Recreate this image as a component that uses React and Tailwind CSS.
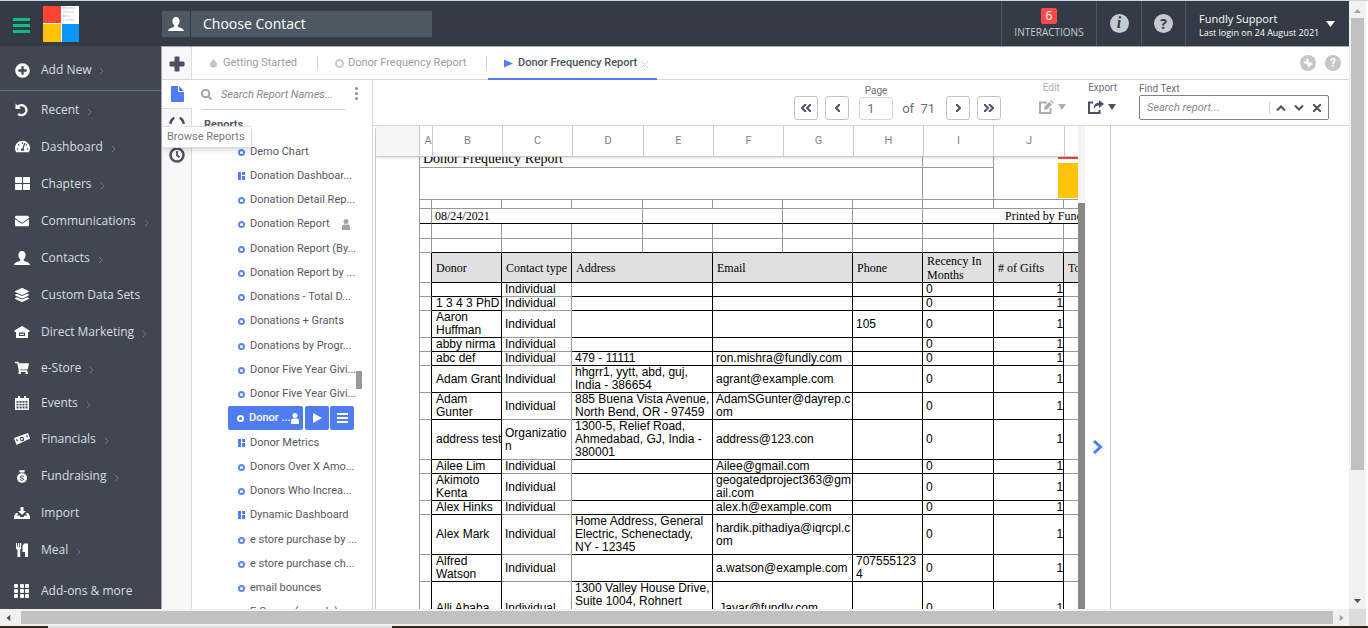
import React from "react"
import { FaPlusCircle, FaThLarge, FaEnvelope, FaShoppingCart, FaTachometerAlt, FaLayerGroup } from "react-icons/fa"

const menuItems = [
  { label: "Recent", icon: "recent", arrow: true },
  { label: "Dashboard", icon: "dashboard", arrow: true },
  { label: "Chapters", icon: "chapters", arrow: true },
  { label: "Communications", icon: "mail", arrow: true },
  { label: "Contacts", icon: "user", arrow: true },
  { label: "Custom Data Sets", icon: "layers", arrow: false },
  { label: "Direct Marketing", icon: "house", arrow: true },
  { label: "e-Store", icon: "cart", arrow: true, short: true },
  { label: "Events", icon: "calendar", arrow: true, short: true },
  { label: "Financials", icon: "cash", arrow: true },
  { label: "Fundraising", icon: "bag", arrow: true },
  { label: "Import", icon: "import", arrow: false },
  { label: "Meal", icon: "meal", arrow: true },
]

const reports = [
  { name: "Demo Chart" },
  { name: "Donation Dashboar...", dash: true },
  { name: "Donation Detail Rep..." },
  { name: "Donation Report", person: true },
  { name: "Donation Report (By..." },
  { name: "Donation Report by ..." },
  { name: "Donations - Total D..." },
  { name: "Donations + Grants" },
  { name: "Donations by Progr..." },
  { name: "Donor Five Year Givi..." },
  { name: "Donor Five Year Givi..." },
  { name: "Donor ...", active: true },
  { name: "Donor Metrics", dash: true },
  { name: "Donors Over X Amo..." },
  { name: "Donors Who Increa..." },
  { name: "Dynamic Dashboard", dash: true },
  { name: "e store purchase by ..." },
  { name: "e store purchase ch..." },
  { name: "email bounces" },
  { name: "E Comm (sample)" },
]

const rows = [
  { donor: "", type: "Individual", address: "", email: "", phone: "" },
  { donor: "1 3 4 3 PhD", type: "Individual", address: "", email: "", phone: "" },
  { donor: "Aaron\nHuffman", type: "Individual", address: "", email: "", phone: "105" },
  { donor: "abby nirma", type: "Individual", address: "", email: "", phone: "" },
  { donor: "abc def", type: "Individual", address: "479 - 11111", email: "ron.mishra@fundly.com", phone: "" },
  { donor: "Adam Grant", type: "Individual", address: "hhgrr1, yytt, abd, guj,\nIndia - 386654", email: "agrant@example.com", phone: "" },
  { donor: "Adam\nGunter", type: "Individual", address: "885 Buena Vista Avenue,\nNorth Bend, OR - 97459", email: "AdamSGunter@dayrep.c\nom", phone: "" },
  { donor: "address test", type: "Organizatio\nn", address: "1300-5, Relief Road,\nAhmedabad, GJ, India -\n380001", email: "address@123.con", phone: "" },
  { donor: "Ailee Lim", type: "Individual", address: "", email: "Ailee@gmail.com", phone: "" },
  { donor: "Akimoto\nKenta", type: "Individual", address: "", email: "geogatedproject363@gm\nail.com", phone: "" },
  { donor: "Alex Hinks", type: "Individual", address: "", email: "alex.h@example.com", phone: "" },
  { donor: "Alex Mark", type: "Individual", address: "Home Address, General\nElectric, Schenectady,\nNY - 12345", email: "hardik.pithadiya@iqrcpl.c\nom", phone: "" },
  { donor: "Alfred\nWatson", type: "Individual", address: "", email: "a.watson@example.com", phone: "707555123\n4" },
  { donor: "Alli Ababa", type: "Individual", address: "1300 Valley House Drive,\nSuite 1004, Rohnert\nPark, CA, United States -\n94928", email: " Jayar@fundly.com", phone: "" },
]

const columns = [
  { name: "A", width: "w-[13px] pl-1" },
  { name: "B", width: "w-[70px]" },
  { name: "C", width: "w-[70px]" },
  { name: "D", width: "w-[71px]" },
  { name: "E", width: "w-[70px]" },
  { name: "F", width: "w-[70px]" },
  { name: "G", width: "w-[70px]" },
  { name: "H", width: "w-[70px]" },
  { name: "I", width: "w-[70px]" },
  { name: "J", width: "w-[71px]" },
  { name: "", width: "w-[120px]" },
]

function PersonIcon({ className }) {
  return (
    <svg viewBox="0 0 16 14" className={className} fill="currentColor" aria-hidden="true">
      <path d="M8 0C5.6 0 4.4 1.7 4.4 4c0 1.8.8 3.4 1.8 4.3v1.5C4.8 10.8.5 11 0 14h16c-.5-3-4.8-3.2-6.2-4.2V8.3c1-.9 1.8-2.5 1.8-4.3C11.6 1.7 10.4 0 8 0z" />
    </svg>
  )
}

function SmallPerson({ className }) {
  return (
    <svg viewBox="0 0 8 11" className={className} fill="currentColor" aria-hidden="true">
      <circle cx="4" cy="2.5" r="2.5" />
      <path d="M0 11V8.2C0 6.5 1.2 5.6 2.4 5.6h3.200C6.8 5.6 8 6.5 8 8.2V11z" />
    </svg>
  )
}

function Caret({ className }) {
  return (
    <svg viewBox="0 0 8 6" preserveAspectRatio="none" className={`shrink-0 ${className}`} fill="currentColor" aria-hidden="true">
      <path d="M0 0h8L4 6z" />
    </svg>
  )
}

function Chevron({ className, d = "M1 1l4 4-4 4", box = "0 0 6 10", width = "2" }) {
  return (
    <svg viewBox={box} className={className} fill="none" stroke="currentColor" strokeWidth={width} aria-hidden="true">
      <path d={d} />
    </svg>
  )
}

function MenuIcon({ name }) {
  if (name === "recent")
    return (
      <svg viewBox="0 0 14 14" className="size-3.5" fill="none" stroke="currentColor" strokeWidth="2.400">
        <path d="M3 3.500A5 5 0 1 1 3.200 11" />
        <path d="M.5.5v5.500h5.500z" fill="currentColor" stroke="none" />
      </svg>
    )
  if (name === "dashboard") return <FaTachometerAlt className="size-[15px]" />
  if (name === "chapters")
    return (
      <FaThLarge className="size-[15px]" />
    )
  if (name === "mail") return <FaEnvelope className="size-3.5" />
  if (name === "user") return <PersonIcon className="h-3.5 w-4" />
  if (name === "layers") return <FaLayerGroup className="size-3.5" />
  if (name === "cart") return <FaShoppingCart className="size-3.5" />
  if (name === "house")
    return (
      <svg viewBox="0 0 16 14" className="h-3.5 w-4" fill="currentColor">
        <path fillRule="evenodd" d="M8 1l7.500 4.500V7H14v6H2V7H.5V5.500zM5 7.500V11h6V7.500z" />
        <path d="M6 8.800h4v1.200H6z" />
      </svg>
    )
  if (name === "calendar")
    return (
      <svg viewBox="0 0 14 14" className="size-3.5" fill="currentColor">
        <path
          fillRule="evenodd"
          d="M3 0h2v2h4V0h2v2h3v12H0V2h3zM1.500 5v1.800h2V5zm3 0v1.800h2V5zm3 0v1.800h2V5zm3 0v1.800h2V5zm-9 2.800v1.800h2V7.800zm3 0v1.800h2V7.800zm3 0v1.800h2V7.800zm3 0v1.800h2V7.800zm-9 2.800v1.800h2v-1.800zm3 0v1.800h2v-1.800zm3 0v1.800h2v-1.800zm3 0v1.800h2v-1.800z"
        />
      </svg>
    )
  if (name === "cash")
    return (
      <svg viewBox="0 0 16 14" className="h-3.5 w-4" fill="currentColor">
        <path
          fillRule="evenodd"
          d="M0 6L14 1l2 5.500L2.500 13zM8 4.800a2.200 2.200 0 1 0 .1 4.400A2.200 2.200 0 0 0 8 4.800zM2 7.500l.8 2 1.200-.5-.8-2zm10-4l.8 2 1.200-.5-.8-2z"
        />
        <circle cx="8" cy="7" r="1" />
      </svg>
    )
  if (name === "bag")
    return (
      <svg viewBox="0 0 14 14" className="size-3.5" fill="currentColor">
        <path d="M4 1l1.500.6L7 1l1.500.6L10 1 9.200 3.400H4.800z" />
        <ellipse cx="7" cy="9" rx="5" ry="4.800" />
        <path d="M8.800 7.600C8 6.600 5.300 6.700 5.300 8s3.400.9 3.400 2.200-2.700 1.400-3.500.4" fill="none" stroke="#414751" />
      </svg>
    )
  if (name === "import")
    return (
      <svg viewBox="0 0 16 14" className="h-3.5 w-4" fill="currentColor">
        <path d="M6.500 1h3v4H12L8 9 4 5h2.500z" />
        <path d="M2 7h2.200L3 9.500h2.500L6.500 11h3l1-1.500H13L11.800 7H14l2 3v3H0v-3z" />
      </svg>
    )
  return (
    <svg viewBox="0 0 14 14" className="size-3.5" fill="currentColor">
      <path d="M1 0h1.200v4h.8V0h1.200v4H5V0h1.200v5.500L5.200 7v7H2.500V7L1 5.500zM7.500 3L9 .5h4V14h-3V9H7.500z" />
    </svg>
  )
}

function Sidebar() {
  return (
    <nav className="w-[161px] shrink-0 overflow-hidden bg-[#414751] font-['Open_Sans',sans-serif] text-xs text-[#d9dde2]">
      <a href="#add" className="flex h-[45px] items-center border-b border-[#66748a] pt-1 pl-3.5">
        <span className="flex w-4 justify-center text-white">
          <FaPlusCircle className="size-[15px]" />
        </span>
        <span className="ml-[11px]">Add New</span>
        <Chevron className="mt-0.5 ml-2 h-2 w-[5px] text-[#808791]" width="1" />
      </a>
      <ul>
        {menuItems.map((item) => (
          <li key={item.label}>
            <a href="#menu" className={`flex items-center pl-3.5 ${item.short ? "h-[35px]" : "h-[37px]"}`}>
              <span className="flex w-4 justify-center text-white">
                <MenuIcon name={item.icon} />
              </span>
              <span className="ml-[11px] whitespace-nowrap">{item.label}</span>
              {item.arrow && <Chevron className="mt-1 ml-2 h-2 w-[5px] text-[#808791]" width="1" />}
            </a>
          </li>
        ))}
      </ul>
      <a href="#more" className="flex h-[45px] items-center pl-3.5">
        <span className="grid w-4 grid-cols-3 gap-px">
          {[...Array(9)].map((_, i) => (
            <i key={i} className="size-[4px] rounded-[1px] bg-white" />
          ))}
        </span>
        <span className="ml-[11px]">Add-ons & more</span>
      </a>
    </nav>
  )
}

function Header() {
  return (
    <header className="flex h-[45px] shrink-0 bg-[#353b45] font-['Open_Sans',sans-serif] text-white">
      <div className="flex w-[162px] shrink-0 items-center pl-[13px]">
        <button aria-label="Toggle menu" className="flex w-[17px] flex-col gap-[3px] pt-1">
          <i className="h-[3px] w-full bg-[#0dbf87]" />
          <i className="h-[3px] w-full bg-[#0dbf87]" />
          <i className="h-[3px] w-full bg-[#0dbf87]" />
        </button>
        <div className="ml-[13px] grid size-9 grid-cols-2 grid-rows-2 gap-px bg-white">
          <i className="bg-[#ff4436]" />
          <span className="pl-px text-[4px] leading-[4px] text-[#b0b0b0]">
            Monty<br />Chess<br />Arts<br />Center
          </span>
          <i className="bg-[#ffc30a]" />
          <i className="bg-[#0a95ff]" />
        </div>
      </div>
      <div className="flex flex-1 items-center">
        <label htmlFor="contact" aria-label="Contact" className="flex h-[26px] w-7 items-center justify-center bg-[#4d5863]">
          <PersonIcon className="h-3.5 w-4" />
        </label>
        <input
          id="contact"
          placeholder="Choose Contact"
          className="ml-px h-[26px] w-[241px] bg-[#4d5863] px-3 text-sm outline-none placeholder:text-white"
        />
      </div>
      <a href="#interactions" className="flex w-[95px] flex-col items-center border-l border-[#4c5663] pt-[7px] text-[10px] leading-[14px] text-[#c4cad1]">
        <span className="h-4 w-4 rounded-xs bg-[#ff4a4a] text-center text-xs leading-4 text-white">6</span>
        <span className="pt-px">INTERACTIONS</span>
      </a>
      <a href="#info" aria-label="Info" className="flex w-[45px] items-center justify-center border-l border-[#4c5663]">
        <span className="size-[19px] rounded-full bg-[#c4cad1] text-center font-['Liberation_Serif',serif] text-base leading-[18px] font-bold text-[#353b45] italic">i</span>
      </a>
      <a href="#help" aria-label="Help" className="flex w-11 items-center justify-center border-l border-[#4c5663]">
        <span className="size-[19px] rounded-full bg-[#c4cad1] text-center text-sm leading-[19px] font-bold text-[#353b45]">?</span>
      </a>
      <button className="flex w-[164px] items-center border-l border-[#4c5663] pl-[13px] text-left">
        <span className="flex-1 pt-1 text-[9px] leading-[14px] font-medium whitespace-nowrap">
          <span className="block text-[11px] font-normal">Fundly Support</span>
          Last login on 24 August 2021
        </span>
        <Caret className="mr-3.5 h-1.5 w-[9px]" />
      </button>
    </header>
  )
}

function TabBar() {
  return (
    <div className="flex h-[33px] shrink-0 border-b border-[#d4d6da] text-[11px] text-[#9a9ea6]">
      <button aria-label="New report" className="flex w-[30px] items-center justify-center border-r border-[#dddddd] bg-[#f7f7f7] pt-px">
        <svg viewBox="0 0 16 16" className="size-4" fill="#4a5162">
          <path d="M5.500 1.500q0-1 1-1h3q1 0 1 1v4h4q1 0 1 1v3q0 1-1 1h-4v4q0 1-1 1h-3q-1 0-1-1v-4h-4q-1 0-1-1v-3q0-1 1-1h4z" />
        </svg>
      </button>
      <a href="#start" className="flex w-[125px] items-center pl-[17px]">
        <svg viewBox="0 0 10 10" className="mt-px mr-[5px] size-[9px]" fill="#c0c3c9">
          <path d="M5 0l5 6H8.500v3H6v1H4V9H1.500V6H0z" />
        </svg>
        Getting Started
      </a>
      <i className="h-3.5 w-px self-center bg-[#cfd1d5]" />
      <a href="#report1" className="flex w-[168px] items-center pl-[17px]">
        <i className="mt-px mr-1 size-[9px] rounded-full border-2 border-[#c6c8cd]" />
        Donor Frequency Report
      </a>
      <i className="h-3.5 w-px self-center bg-[#cfd1d5]" />
      <a href="#report2" className="-mb-px ml-px flex w-[169px] items-center border-b-2 border-[#4f7df0] pt-px pl-4 font-medium text-[#4a5162]">
        <svg viewBox="0 0 10 9" className="mt-px mr-[5px] h-[9px] w-[9px]" fill="#4f7df0">
          <path d="M0 0l10 4.500L0 9z" />
        </svg>
        Donor Frequency Report
        <svg viewBox="0 0 7 7" className="mt-0.5 ml-1 size-[7px]" stroke="#cfd1d5">
          <path d="M0 0l7 7M7 0L0 7" />
        </svg>
      </a>
      <div className="flex flex-1 items-center justify-end gap-[9px] pr-2">
        <button aria-label="Tools" className="size-4 rounded-full bg-[#c3c6cb]">
          <svg viewBox="0 0 16 16" className="size-4" fill="none" stroke="#ffffff">
            <path d="M6 6l4.500 4.500" strokeWidth="2.400" />
            <path d="M4 6.500A2 2 0 1 0 6.500 4M12 9.500A2 2 0 1 0 9.500 12" strokeWidth="1.800" />
          </svg>
        </button>
        <button aria-label="Help" className="size-4 rounded-full bg-[#c3c6cb] text-center text-xs leading-4 font-bold text-white">?</button>
      </div>
    </div>
  )
}

function Rail() {
  return (
    <div className="relative z-20 flex w-[30px] shrink-0 flex-col border-r border-[#dddddd] bg-[#f7f7f7]">
      <button aria-label="Browse Reports" className="-mr-px flex h-[29px] items-center justify-center border-b border-[#dddddd] bg-white pb-px">
        <svg viewBox="0 0 13 16" className="h-4 w-[13px]" fill="#4f7df0">
          <path d="M1 0h6v6h6v9q0 1-1 1H1q-1 0-1-1V1q0-1 1-1z" />
          <path d="M8 0l5 5H8z" />
        </svg>
      </button>
      <button aria-label="Data" className="flex h-[30px] items-center justify-center">
        <svg viewBox="0 0 16 16" className="size-4" fill="none" stroke="#4a5162" strokeWidth="2.500">
          <path d="M1.500 8a6.500 6.500 0 0 1 4-6M10.500 2a6.500 6.500 0 0 1 4 6M3 12a6.500 6.500 0 0 0 10 0" />
        </svg>
      </button>
      <button aria-label="Recent" className="flex h-[31px] items-center justify-center">
        <svg viewBox="0 0 16 16" className="size-4" fill="none" stroke="#4a5162" strokeWidth="2.500">
          <circle cx="8" cy="8" r="6.500" />
          <path d="M8 4v4.300l2.500 2" strokeWidth="1.800" />
        </svg>
      </button>
      {/* tooltip under the file button */}
      <div className="absolute top-[46px] left-0 rounded-r-xs border border-l-0 border-[#dddddd] bg-white pr-1.5 pl-[5px] text-[11px] leading-5 whitespace-nowrap text-[#777b83] shadow-md">
        <svg viewBox="0 0 16 13" className="absolute -top-3 left-[7px] h-[13px] w-4" fill="#ffffff">
          <path d="M8 0l8 13H0z" />
        </svg>
        Browse Reports
      </div>
    </div>
  )
}

function ReportIcon({ dash, white }) {
  if (dash)
    return (
      <svg viewBox="0 0 7 8" className="mr-[5px] h-2 w-[7px] shrink-0" fill="#4f7df0">
        <path d="M0 0h3v8H0zM4 0h3v3H4zM4 4h3v4H4z" />
      </svg>
    )
  return <i className={`mr-[5px] size-[7px] shrink-0 rounded-full border-2 ${white ? "border-white" : "border-[#5c86f0]"}`} />
}

function ReportList() {
  return (
    <div className="relative flex w-[181px] shrink-0 flex-col overflow-hidden border-r border-[#d4d6da] bg-white text-[11px] text-[#54585f]">
      <div className="flex h-[30px] shrink-0">
        <div className="ml-[9px] flex w-36 items-center border-b border-[#cfd1d5]">
          <svg viewBox="0 0 12 12" className="size-[11px] shrink-0" fill="none" stroke="#9a9ea6" strokeWidth="2">
            <circle cx="5" cy="5" r="4" />
            <path d="M8 8l3.500 3.500" />
          </svg>
          <input aria-label="Search Report Names" placeholder="Search Report Names..." className="ml-[9px] w-full pt-px italic outline-none placeholder:text-[#85898f]" />
        </div>
        <button aria-label="More" className="ml-2.5 flex flex-col items-center justify-center gap-0.5 pb-1">
          <i className="size-[3px] rounded-full bg-[#8f939b]" />
          <i className="size-[3px] rounded-full bg-[#8f939b]" />
          <i className="size-[3px] rounded-full bg-[#8f939b]" />
        </button>
      </div>
      <h2 className="h-[30px] shrink-0 pl-3 leading-[29px] font-bold">Reports</h2>
      <ul className="[&>li:nth-child(4n)]:mb-px">
        {reports.map((report, idx) =>
          report.active ? (
            <li key={idx} className="flex h-6 gap-px pl-9 text-white">
              <button className="mr-px flex w-[75px] items-center rounded-xs bg-[#4f7df0] pl-[9px] font-medium whitespace-nowrap">
                <ReportIcon white />
                {report.name}
                <SmallPerson className="h-[11px] w-2 shrink-0" />
              </button>
              <button aria-label="Run" className="flex w-6 items-center justify-center rounded-xs bg-[#4f7df0]">
                <svg viewBox="0 0 9 10" className="h-2.5 w-[9px]" fill="currentColor">
                  <path d="M0 0l9 5-9 5z" />
                </svg>
              </button>
              <button aria-label="Options" className="flex w-6 flex-col items-center justify-center gap-0.5 rounded-xs bg-[#4f7df0]">
                <i className="h-0.5 w-[11px] bg-white" />
                <i className="h-0.5 w-[11px] bg-white" />
                <i className="h-0.5 w-[11px] bg-white" />
              </button>
            </li>
          ) : (
            <li key={idx} className="flex h-6 items-center pl-[46px] whitespace-nowrap">
              <ReportIcon dash={report.dash} />
              {report.name}
              {report.person && <SmallPerson className="ml-3 h-[11px] w-2 text-[#a0a4ab]" />}
            </li>
          )
        )}
      </ul>
      <i className="absolute top-[291px] right-2.5 h-[18px] w-1.5 bg-[#999999]" />
    </div>
  )
}

const navButton = "flex size-6 items-center justify-center rounded-[3px] border border-[#bfc2c8] text-[#4a5162]"

function Toolbar() {
  return (
    <div className="flex h-[46px] shrink-0 items-end justify-end border-b border-[#d4d6da] pr-5 pb-[5px] text-[10px] leading-3 text-[#6a6f7a]">
      <button aria-label="First page" className={navButton}>
        <Chevron className="h-2 w-2.5" box="0 0 10 8" d="M5 0L1 4l4 4M10 0L6 4l4 4" />
      </button>
      <button aria-label="Previous page" className={`ml-[7px] ${navButton}`}>
        <Chevron className="h-2 w-[5px]" box="0 0 5 8" d="M5 0L1 4l4 4" />
      </button>
      <label className="ml-2.5 flex w-[34px] flex-col items-center">
        Page
        <input defaultValue="1" className="h-[23px] w-full rounded-[3px] border border-[#d4d6da] pl-[7px] text-[13px] outline-none" />
      </label>
      <span className="ml-[9px] w-11 text-[13px] leading-[22px]">of&nbsp; 71</span>
      <button aria-label="Next page" className={navButton}>
        <Chevron className="h-2 w-[5px]" box="0 0 5 8" d="M0 0l4 4-4 4" />
      </button>
      <button aria-label="Last page" className={`ml-[7px] ${navButton}`}>
        <Chevron className="h-2 w-2.5" box="0 0 10 8" d="M0 0l4 4-4 4M5 0l4 4-4 4" />
      </button>
      <button className="ml-[38px] flex h-[38px] flex-col gap-1.5 text-[#a9adb4]">
        <span className="w-6 text-center">Edit</span>
        <span className="flex items-center gap-1">
          <svg viewBox="0 0 15 14" className="h-3.5 w-[15px]" fill="none" stroke="currentColor" strokeWidth="2">
            <path d="M8 2.500H1V13h10.500V8" />
            <path d="M5 9.800l.5-3.300L10.200 1.800l2.800 2.800-4.700 4.700zM11 1l1-1 2.800 2.800-1 1z" fill="currentColor" stroke="none" />
          </svg>
          <Caret className="h-1.5 w-2" />
        </span>
      </button>
      <button className="ml-[22px] flex h-[38px] flex-col gap-1.5 text-[#4a5162]">
        <span className="text-[#6a6f7a]">Export</span>
        <span className="flex items-center gap-1">
          <svg viewBox="0 0 16 14" className="h-3.5 w-4" fill="none" stroke="currentColor" strokeWidth="2">
            <path d="M5 2.500H1V13h10.500V10" />
            <path d="M11 0l5 4-5 4V5.500C8.500 5.500 7 6.500 6 9 5 5.500 7.500 2.800 11 2.500z" fill="currentColor" stroke="none" />
          </svg>
          <Caret className="h-1.5 w-2" />
        </span>
      </button>
      <div className="ml-[22px] flex w-[190px] flex-col">
        <label htmlFor="find">Find Text</label>
        <div className="flex h-[25px] items-center rounded-xs border border-[#7b8494] text-[#4a5162]">
          <input id="find" placeholder="Search report..." className="min-w-0 flex-1 pl-[7px] text-[11px] italic outline-none placeholder:text-[#85898f]" />
          <i className="h-3 w-px bg-[#cfd1d5]" />
          <button aria-label="Previous match" className="ml-1.5">
            <Chevron className="h-1.5 w-2.5" box="0 0 10 6" d="M1 5.500l4-4 4 4" />
          </button>
          <button aria-label="Next match" className="ml-2">
            <Chevron className="h-1.5 w-2.5" box="0 0 10 6" d="M1 .5l4 4 4-4" />
          </button>
          <button aria-label="Clear" className="mr-[7px] ml-[9px]">
            <Chevron className="size-2" box="0 0 8 8" d="M0 0l8 8M8 0L0 8" />
          </button>
        </div>
      </div>
    </div>
  )
}

const black = "border-black"
const gray = "border-[#999999]"
const cell = "border-r border-b p-0"
const head = "border-r border-b border-black bg-[#e0e0e0] p-0 pl-1 text-left font-normal"

function BlankRow({ height, strong }) {
  return (
    <tr className={height}>
      {[...Array(11)].map((_, i) => (
        <td key={i} className={`${cell} ${gray} ${strong && i > 0 ? "border-b-black" : ""}`} />
      ))}
    </tr>
  )
}

function ReportTable() {
  return (
    <table className="ml-[43px] w-[800px] table-fixed border-separate border-spacing-0 border-l border-[#999999] font-['Liberation_Sans',Arial,sans-serif] text-xs leading-[13px] text-black">
      <colgroup>
        <col className="w-3" />
        <col className="w-[70px]" />
        <col className="w-[70px]" />
        <col className="w-[71px]" />
        <col className="w-[70px]" />
        <col className="w-[70px]" />
        <col className="w-[70px]" />
        <col className="w-[70px]" />
        <col className="w-[71px]" />
        <col className="w-[70px]" />
        <col className="w-[70px]" />
        <col />
      </colgroup>
      <tbody className="font-['Liberation_Serif',serif]">
        <tr className="h-[11px]">
          <td colSpan={8} className={`${cell} ${gray}`}>
            <div className="flex h-2.5 items-end overflow-hidden pl-[3px] text-sm leading-4">Donor Frequency Report</div>
          </td>
          <td className={`${cell} ${gray}`} />
          <td colSpan={3} rowSpan={2} className={`${cell} ${gray} align-top`}>
            <div className="ml-16 h-0.5 bg-[#ff4436]" />
            <div className="mt-1 ml-16 h-[35px] bg-[#ffc30a]" />
          </td>
        </tr>
        <tr className="h-8">
          <td colSpan={8} className={`${cell} ${gray}`} />
          <td className={`${cell} ${gray}`} />
        </tr>
        <BlankRow height="h-[9px]" />
        <tr className="h-[15px]">
          <td className={`${cell} ${gray} border-b-black`} />
          <td colSpan={3} className={`${cell} ${gray} border-b-black pl-[3px]`}>08/24/2021</td>
          <td colSpan={2} className={`${cell} ${gray} border-b-black`} />
          <td className={`${cell} ${gray} border-b-black`} />
          <td className={`${cell} ${gray} border-b-black`} />
          <td colSpan={4} className={`${cell} ${gray} border-b-black pl-[82px] whitespace-nowrap`}>Printed by Fundly Support</td>
        </tr>
        <BlankRow height="h-[15px]" />
        <BlankRow height="h-3.5" strong />
        <tr className="h-[30px] text-xs leading-[14px]">
          <td className={`${cell} ${gray} border-r-black`} />
          <th className={head}>Donor</th>
          <th className={`${head} whitespace-nowrap`}>Contact type</th>
          <th colSpan={2} className={head}>Address</th>
          <th colSpan={2} className={head}>Email</th>
          <th className={head}>Phone</th>
          <th className={head}>Recency In Months</th>
          <th className={head}># of Gifts</th>
          <th colSpan={2} className={head}>Total Gifts</th>
        </tr>
      </tbody>
      <tbody className="whitespace-pre">
        {rows.map((row, idx) => (
          <tr key={idx} className="h-3.5">
            <td className={`${cell} ${gray} border-r-black`} />
            <td className={`${cell} ${black} pl-1`}>{row.donor}</td>
            <td className={`${cell} ${gray} pl-[3px]`}>{row.type}</td>
            <td colSpan={2} className={`${cell} ${black} pl-[3px]`}>{row.address}</td>
            <td colSpan={2} className={`${cell} ${black} pl-[3px]`}>{row.email}</td>
            <td className={`${cell} ${black} pl-[3px]`}>{row.phone}</td>
            <td className={`${cell} ${black} pl-[3px]`}>0</td>
            <td className={`${cell} ${black} text-right`}>1</td>
            <td colSpan={2} className={`${cell} ${gray}`} />
          </tr>
        ))}
      </tbody>
    </table>
  )
}

function Viewer() {
  return (
    <div className="flex min-h-0 flex-1">
      <div className="ml-0.5 flex min-w-0 flex-1 flex-col overflow-hidden rounded-tl-sm border-l border-[#c6c9cf]">
        <div className="z-10 flex h-[31px] shrink-0 border-b border-[#c6c9cf] text-[11px] text-[#7d828c] shadow-sm">
          <div className="w-11 shrink-0 border-r border-[#c6c9cf] bg-[#f5f5f5]" />
          {columns.map((col) => (
            <div key={col.name} className={`flex shrink-0 items-center justify-center border-r border-[#c6c9cf] pt-px ${col.width}`}>
              {col.name}
            </div>
          ))}
        </div>
        <div className="min-h-0 flex-1 overflow-hidden">
          <ReportTable />
        </div>
      </div>
      <div className="flex w-[7px] shrink-0 flex-col bg-[#f3f3f3] pt-[77px]">
        <i className="flex-1 bg-[#888888]" />
      </div>
      <div className="flex w-[26px] shrink-0 items-start justify-center border-r border-[#c6c9cf] pt-[314px]">
        <button aria-label="Expand panel">
          <Chevron className="h-3.5 w-2.5 text-[#4f7df0]" box="0 0 10 14" d="M1 1l6.500 6L1 13" width="3" />
        </button>
      </div>
      <aside className="w-[238px] shrink-0 bg-white" />
    </div>
  )
}

export default function App() {
  return (
    <div className="flex h-screen flex-col overflow-hidden border-t border-[#ccd6dc] bg-white font-[Roboto,sans-serif]">
      <div className="flex min-h-0 flex-1">
        <div className="flex min-w-0 flex-1 flex-col">
          <Header />
          <div className="flex min-h-0 flex-1">
            <Sidebar />
            <main className="flex min-w-0 flex-1 flex-col border-t border-l border-[#a5a8ad]">
              <TabBar />
              <div className="flex min-h-0 flex-1">
                <Rail />
                <ReportList />
                <section className="flex min-w-0 flex-1 flex-col">
                  <Toolbar />
                  <Viewer />
                </section>
              </div>
            </main>
          </div>
        </div>
        {/* page scrollbar */}
        <div className="mr-0.5 flex w-[17px] shrink-0 flex-col items-center bg-[#f1f1f1] pb-1.5">
          <Caret className="mt-2 h-1 w-[7px] rotate-180 text-[#a3a3a3]" />
          <i className="mt-[5px] h-[452px] w-[13px] bg-[#c1c1c1]" />
          <Caret className="mt-auto h-1 w-[7px] text-[#505050]" />
        </div>
      </div>
      <div className="mr-0.5 flex h-[17px] shrink-0 items-center bg-[#f1f1f1]">
        <Caret className="ml-[5px] h-1 w-[7px] rotate-90 text-[#505050]" />
        <i className="ml-[9px] h-[13px] flex-1 bg-[#c1c1c1]" />
        <Caret className="mr-1 ml-[5px] h-1 w-[7px] -rotate-90 text-[#a3a3a3]" />
        <i className="h-full w-[17px] bg-[#dcdcdc]" />
      </div>
      <div className="flex h-0.5 shrink-0 bg-[#30261f]">
        <i className="ml-12 w-[344px] bg-[#e0e0e0]" />
      </div>
    </div>
  )
}
